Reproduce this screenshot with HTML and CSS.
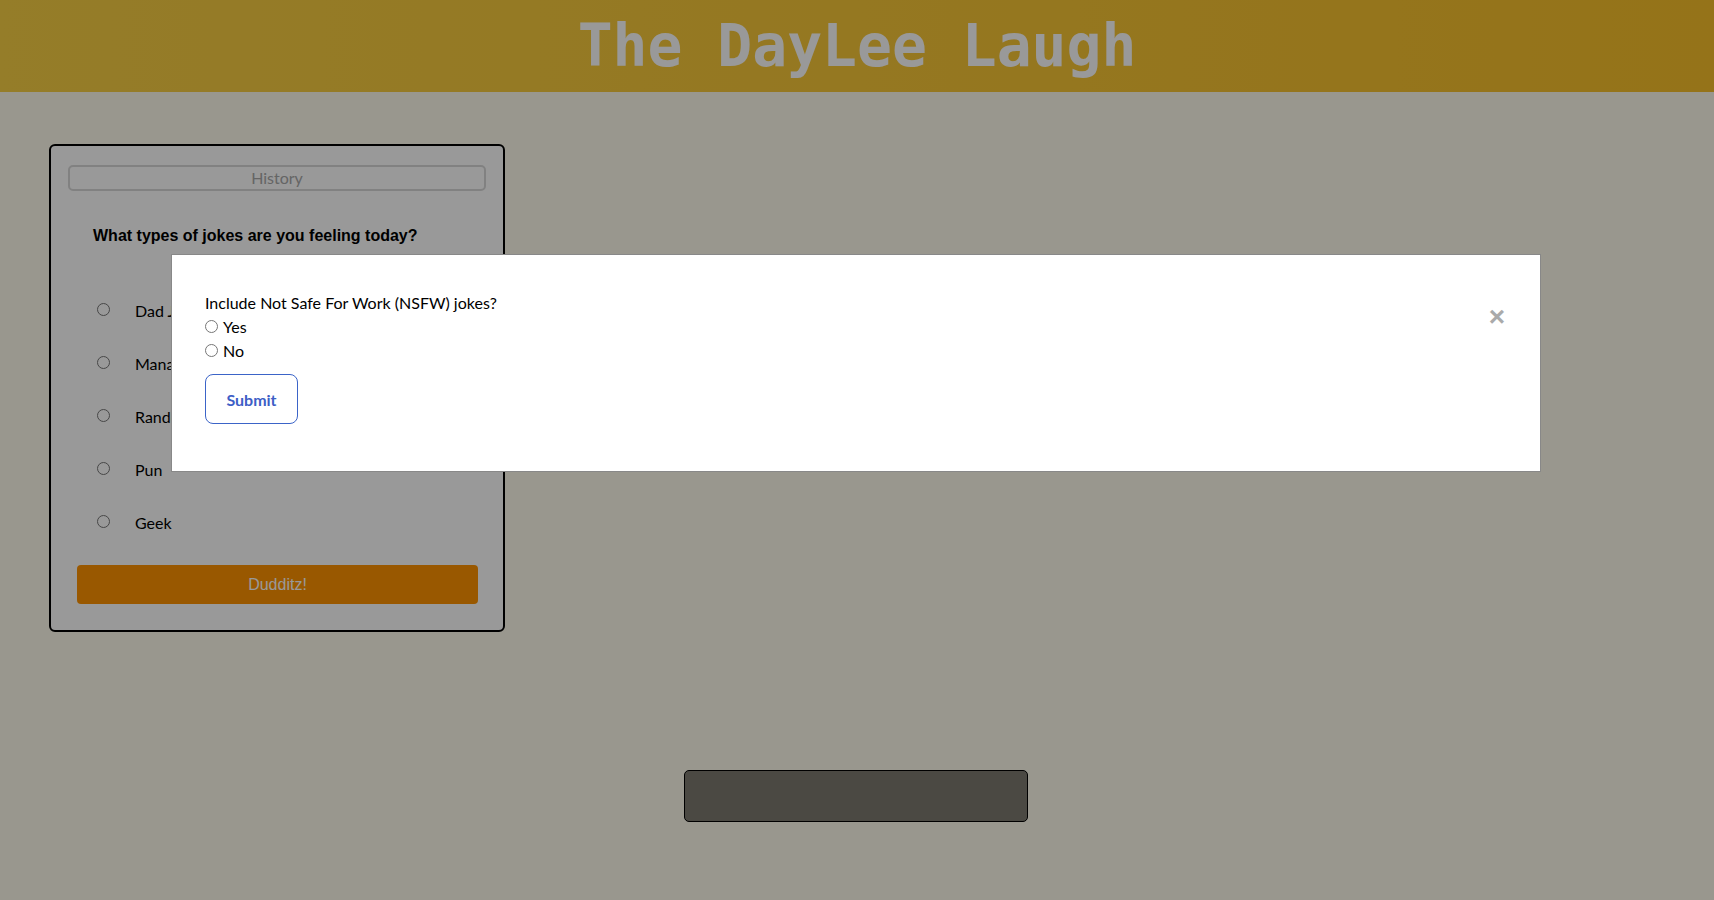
FILE: index.html
```html
<!DOCTYPE html>
<html lang="en">
<head>
<meta charset="utf-8">
<title>The DayLee Laugh</title>
<link rel="stylesheet" href="styles.css">
</head>
<body>
<header class="site-header">
  <h1 class="site-title">The DayLee Laugh</h1>
</header>
<main class="main">
  <section class="card">
    <button class="history-btn" type="button">History</button>
    <p class="question">What types of jokes are you feeling today?</p>
    <ul class="choices">
      <li class="choice"><input type="radio" name="type" id="t1"><label for="t1">Dad Jokes</label></li>
      <li class="choice"><input type="radio" name="type" id="t2"><label for="t2">Manager</label></li>
      <li class="choice"><input type="radio" name="type" id="t3"><label for="t3">Random</label></li>
      <li class="choice"><input type="radio" name="type" id="t4"><label for="t4">Pun</label></li>
      <li class="choice"><input type="radio" name="type" id="t5"><label for="t5">Geek</label></li>
    </ul>
    <button class="go-btn" type="button">Dudditz!</button>
  </section>
  <div class="joke-box"></div>
</main>
<div class="overlay">
  <div class="modal">
    <form class="modal-form">
      <p class="modal-question">Include Not Safe For Work (NSFW) jokes?</p>
      <div class="modal-option"><input type="radio" name="nsfw" id="yes"><label for="yes">Yes</label></div>
      <div class="modal-option"><input type="radio" name="nsfw" id="no"><label for="no">No</label></div>
      <button class="submit-btn" type="button">Submit</button>
    </form>
    <span class="close">&times;</span>
  </div>
</div>
</body>
</html>
```
FILE: styles.css
```css
* { box-sizing: border-box; }
html, body { margin: 0; padding: 0; }
body {
  background: #fffced;
  font-family: Lato, "Open Sans", sans-serif;
  font-size: 16px;
  color: #000;
  min-height: 900px;
}
.site-header {
  height: 92px;
  display: flex;
  align-items: center;
  justify-content: center;
  background: linear-gradient(to right, #f9d045, #f9c02a);
}
.site-title {
  margin: 0;
  font-family: "DejaVu Sans Mono", monospace;
  font-weight: bold;
  font-size: 58px;
  line-height: 68px;
  color: #fff;
}
.main {
  display: flex;
  flex-direction: column;
  padding: 52px 0 0 0;
}
.card {
  width: 456px;
  margin-left: 49px;
  border: 2px solid #000;
  border-radius: 6px;
  background: #fff;
  padding: 19px 17px 26px 17px;
}
.history-btn {
  display: block;
  width: 100%;
  height: 26px;
  margin: 0;
  padding: 0;
  border: 2px solid #d8d8d8;
  border-radius: 5px;
  background: transparent;
  font-family: Lato, "Open Sans", sans-serif;
  font-size: 16px;
  line-height: 20px;
  color: #a8a8a8;
}
.question {
  margin: 36px 0 0 0;
  padding-left: 25px;
  font-family: "Liberation Sans", Arial, sans-serif;
  font-weight: bold;
  font-size: 16px;
  line-height: 18px;
}
.choices {
  list-style: none;
  margin: 38px 0 0 0;
  padding: 0;
}
.choice {
  height: 53px;
  display: flex;
  align-items: center;
  padding-left: 29px;
}
.choice input {
  margin: 0 25px 0 0;
  width: 13px;
  height: 13px;
}
.choice label {
  font-size: 16px;
  line-height: 20px;
  padding-top: 2px;
}
.go-btn {
  display: block;
  width: 401px;
  height: 39px;
  margin: 17px 0 0 9px;
  border: none;
  border-radius: 4px;
  background: #ff9300;
  color: #fff;
  font-family: "Liberation Sans", Arial, sans-serif;
  font-size: 16px;
}
.joke-box {
  width: 344px;
  height: 52px;
  margin: 138px auto 0;
  position: relative;
  left: -1px;
  background: #7d7a71;
  border: 1.5px solid #000;
  border-radius: 5px;
}
.overlay {
  position: fixed;
  inset: 0;
  background: rgba(0, 0, 0, 0.4);
}
.modal {
  width: 1370px;
  margin: 254px 0 0 171px;
  background: #fff;
  border: 1px solid #888;
  padding: 37px 35px 47px 33px;
  display: flex;
  justify-content: space-between;
  align-items: flex-start;
}
.modal-form {
  display: flex;
  flex-direction: column;
  align-items: flex-start;
}
.modal-question {
  margin: 0;
  font-size: 16px;
  line-height: 22px;
}
.modal-option {
  height: 24px;
  display: flex;
  align-items: center;
}
.modal-option input {
  margin: 0 5px 0 0;
  width: 13px;
  height: 13px;
}
.modal-option label {
  font-size: 16px;
  line-height: 20px;
  padding-top: 1px;
}
.submit-btn {
  margin-top: 12px;
  width: 93px;
  height: 50px;
  border: 1px solid #3b64c8;
  border-radius: 8px;
  background: #fff;
  color: #3d5ec6;
  font-family: Lato, "Open Sans", sans-serif;
  font-weight: bold;
  font-size: 16px;
}
.close {
  margin-top: 11px;
  font-family: "Liberation Sans", Arial, sans-serif;
  font-size: 28px;
  font-weight: bold;
  line-height: 28px;
  color: #aaa;
  cursor: pointer;
}
```
